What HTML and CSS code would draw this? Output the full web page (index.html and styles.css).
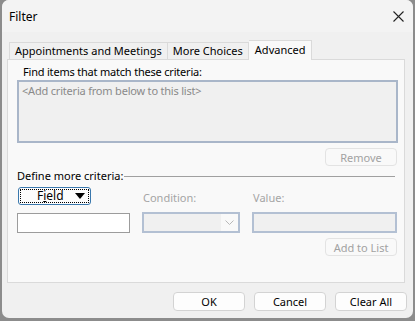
FILE: index.html
```html
<!DOCTYPE html>
<html lang="en">
<head>
<meta charset="UTF-8">
<title>Filter</title>
<link rel="stylesheet" href="styles.css">
</head>
<body>

<div class="window">
  <div class="titlebar">
    <span class="title">Filter</span>
    <svg class="close" width="11" height="11" viewBox="0 0 11 11">
      <path d="M0.5 0.5 L10.5 10.5 M10.5 0.5 L0.5 10.5" stroke="#222" stroke-width="1.1" fill="none"/>
    </svg>
  </div>

  <div class="tabs">
    <div class="tab tab-first">Appointments and Meetings</div>
    <div class="tab">More Choices</div>
    <div class="tab active">Advanced</div>
  </div>

  <div class="panel">
    <div class="heading">Find items that match these criteria:</div>
    <div class="criteria-list">&lt;Add criteria from below to this list&gt;</div>
    <div class="right-row">
      <button class="btn disabled">Remove</button>
    </div>

    <div class="group-title">
      <span>Define more criteria:</span>
      <span class="rule"></span>
    </div>

    <div class="criteria-grid">
      <button class="field-btn">
        <span class="focus">
          <span class="field-text">F<u>i</u>eld</span>
          <svg class="arrow" width="10" height="6" viewBox="0 0 10 6"><path d="M0 0 H10 L5 6 Z" fill="#000"/></svg>
        </span>
      </button>
      <span class="muted-label">Condition:</span>
      <span class="muted-label">Value:</span>

      <div class="text-input"></div>
      <div class="combo">
        <span class="combo-arrow">
          <svg width="9" height="6" viewBox="0 0 9 6"><path d="M0.5 0.5 L4.5 4.5 L8.5 0.5" stroke="#b8b8b8" fill="none"/></svg>
        </span>
      </div>
      <div class="value-box"></div>
    </div>

    <div class="right-row">
      <button class="btn disabled">Add to List</button>
    </div>
  </div>

  <div class="footer">
    <button class="btn">OK</button>
    <button class="btn">Cancel</button>
    <button class="btn">Clear All</button>
  </div>
</div>

</body>
</html>
```

FILE: styles.css
```css
body {
  margin: 0;
  background: #8c8c8c;
  font-family: "Noto Sans", "Open Sans", Arial, sans-serif;
  font-size: 11px;
  color: #000;
}

.window {
  margin-left: 2px;
  width: 411px;
  height: 318px;
  background: #f0f0f0;
  border-radius: 7px;
  overflow: hidden;
}

.titlebar {
  height: 32px;
  display: flex;
  align-items: center;
  justify-content: space-between;
  padding: 0 9px 0 7px;
  background: #f3f3f3;
  font-size: 12px;
}

.tabs {
  display: flex;
  align-items: flex-end;
  height: 20px;
  margin-top: 7px;
  padding-left: 7px;
}

.tab {
  height: 16px;
  line-height: 16px;
  padding: 0 5px;
  border: 1px solid #dadada;
  border-bottom: none;
  border-left: none;
  background: #f0f0f0;
  white-space: nowrap;
}

.tab-first {
  border-left: 1px solid #dadada;
}

.tab.active {
  height: 19px;
  line-height: 17px;
  padding: 0 6px;
  background: #f9f9f9;
  margin-bottom: -1px;
  position: relative;
}

.panel {
  margin: 0 8px 0 5px;
  height: 222px;
  background: #f9f9f9;
  border: 1px solid #dadada;
  padding: 0 7px 0 9px;
}

.heading {
  margin: 4px 0 0 6px;
  line-height: 16px;
  letter-spacing: -0.2px;
}

.criteria-list {
  height: 59px;
  margin-right: -1px;
  border: 2px solid #a9b6c9;
  background: #f0f0f0;
  color: #8a8a8a;
  padding: 0 3px;
  line-height: 17px;
  letter-spacing: -0.2px;
}

.right-row {
  display: flex;
  justify-content: flex-end;
  margin-top: 5px;
}

.btn {
  font: inherit;
  width: 72px;
  height: 19px;
  padding: 0;
  border: 1px solid #d3d3d3;
  border-radius: 4px;
  background: #fdfdfd;
  color: #000;
}

.btn.disabled {
  height: 18px;
  border-color: #e3e3e3;
  background: #f9f9f9;
  color: #a2a2a2;
}

.group-title {
  display: flex;
  align-items: center;
  gap: 1px;
  margin-top: 2px;
  line-height: 15px;
  padding-right: 2px;
}

.rule {
  flex: 1;
  height: 1px;
  margin-top: 1px;
  background: #a0a0a0;
}

.criteria-grid {
  display: grid;
  grid-template-columns: 113px 98px 145px;
  column-gap: 12px;
  row-gap: 7px;
  align-items: end;
  margin-top: 4px;
}

.field-btn {
  font: inherit;
  font-size: 12px;
  width: 73px;
  height: 18px;
  margin-left: 1px;
  padding: 1px;
  border: 1px solid #3a78ad;
  border-radius: 3px;
  background: #fcfcfc;
  color: #000;
}

.field-btn .focus {
  display: flex;
  align-items: center;
  height: 100%;
  padding: 0 3px 0 16px;
  border: 1px dotted #000;
  box-sizing: border-box;
  line-height: 12px;
}

.field-text {
  flex: 1;
  text-align: left;
}

.muted-label {
  color: #a5a5a5;
  line-height: 14px;
  padding-left: 1px;
}

.text-input {
  height: 18px;
  border: 1px solid #9c9c9c;
  background: #fff;
}

.combo {
  height: 17px;
  border: 2px solid #b3c0d3;
  background: #f0f0f0;
  display: flex;
  justify-content: flex-end;
}

.combo-arrow {
  width: 17px;
  display: flex;
  align-items: center;
  justify-content: center;
  background: #f9f9f9;
}

.value-box {
  height: 17px;
  border: 2px solid #b3c0d3;
  background: #f0f0f0;
}

.footer {
  display: flex;
  justify-content: flex-end;
  gap: 9px;
  padding: 9px 6px 0 0;
}
```
